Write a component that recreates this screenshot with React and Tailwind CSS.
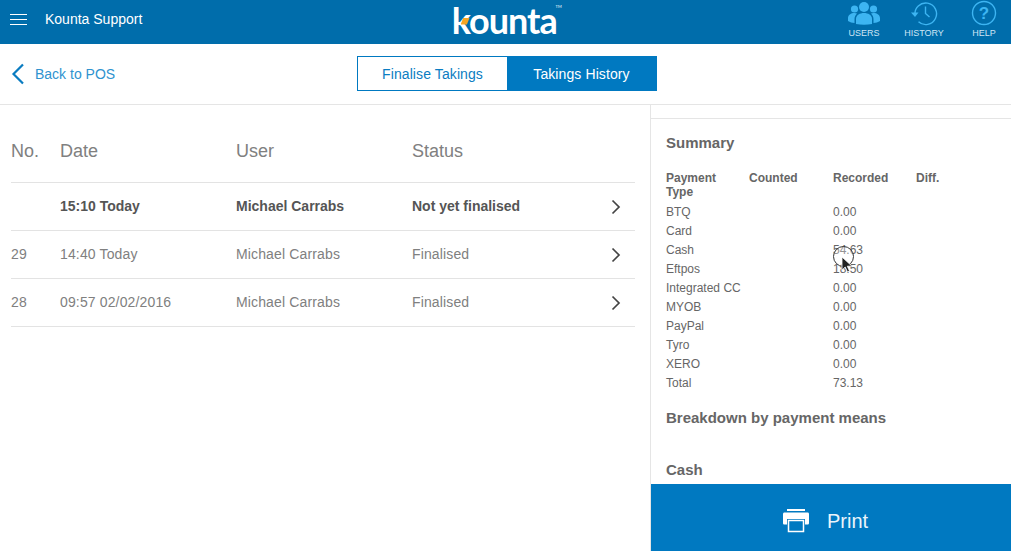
import React from "react";

const rows = [
  { no: "", date: "15:10 Today", user: "Michael Carrabs", status: "Not yet finalised", bold: true },
  { no: "29", date: "14:40 Today", user: "Michael Carrabs", status: "Finalised" },
  { no: "28", date: "09:57 02/02/2016", user: "Michael Carrabs", status: "Finalised" },
];
const pay = [
  ["BTQ", "0.00"], ["Card", "0.00"], ["Cash", "54.63"], ["Eftpos", "18.50"], ["Integrated CC", "0.00"],
  ["MYOB", "0.00"], ["PayPal", "0.00"], ["Tyro", "0.00"], ["XERO", "0.00"], ["Total", "73.13"],
];

function Users() {
  return (
    <svg width="32" height="24" viewBox="0 0 32 24" fill="#3db5f2">
      <circle cx="16" cy="6" r="5" />
      <path d="M8 23v-5c0-4 4-6 8-6s8 2 8 6v5c-5 1-11 1-16 0z" />
      <circle cx="6.500" cy="8" r="3.600" />
      <path d="M0 20v-3c0-3 3-5 6.500-5 1 0 2 .2 2.500.5C7.500 14 6.500 16 6.500 18v4C4 22 2 21 0 20z" />
      <circle cx="25.500" cy="8" r="3.600" />
      <path d="M32 20v-3c0-3-3-5-6.500-5-1 0-2 .2-2.500.5 1.500 1.500 2.500 3.500 2.500 5.500v4c2.500 0 4.500-1 6.500-2z" />
    </svg>
  );
}
function History() {
  return (
    <svg width="28" height="26" viewBox="0 0 28 26" fill="none" stroke="#3db5f2" strokeWidth="1.400">
      <path d="M5 15a10.800 10.800 0 1 1 3.500 6.800" />
      <path d="M1 12.500h7.500L5 17z" fill="#3db5f2" stroke="none" />
      <path d="M15.500 6.500v7l4 3.500" />
    </svg>
  );
}
function Help() {
  return (
    <svg width="26" height="26" viewBox="0 0 26 26" fill="none">
      <circle cx="13" cy="13" r="11.500" stroke="#3db5f2" strokeWidth="1.400" />
      <text x="13" y="19" textAnchor="middle" fontSize="17" fontWeight="700" fontFamily="Liberation Sans" fill="#3db5f2">?</text>
    </svg>
  );
}
function NavItem({ icon, label }) {
  return (
    <div className="flex flex-col items-center w-[60px]">
      <div className="h-[26px] flex items-center justify-center">{icon}</div>
      <div className="text-[9px] leading-[10px] mt-[2px] text-[#cfe6f5]">{label}</div>
    </div>
  );
}
function Chevron() {
  return (
    <svg width="10" height="16" viewBox="0 0 10 16" fill="none" stroke="#444" strokeWidth="1.700">
      <path d="M1.500 1.500 8 8l-6.500 6.500" />
    </svg>
  );
}

export default function App() {
  return (
    <div className="w-[1011px] h-[551px] overflow-hidden bg-white flex flex-col relative" style={{ fontFamily: '"Liberation Sans", Arial, sans-serif' }}>
      <header className="h-[44px] bg-[#006dab] flex items-center text-white shrink-0 relative">
        <div className="w-[45px] pl-[10px] flex flex-col gap-[4px] mb-[6px]">
          <div className="w-[17px] h-px bg-white" />
          <div className="w-[17px] h-px bg-white" />
          <div className="w-[17px] h-px bg-white" />
        </div>
        <div className="text-[14px] mb-[6px]">Kounta Support</div>
        <div className="flex-1 flex justify-center">
          <div className="relative ml-[32px] mt-[-5px] text-[36px] leading-[36px] font-bold tracking-[-1px] h-[36px]" style={{ fontFamily: "Lato, sans-serif" }}>
            kounta
            <span className="absolute left-[9px] top-[16px] w-[9px] h-[7px] bg-[#f5a623] [clip-path:polygon(30%_0,100%_0,70%_100%,0_100%)]" />
            <span className="absolute right-[-5px] top-[3px] text-[4px] leading-[4px] font-normal tracking-normal">TM</span>
          </div>
        </div>
        <div className="flex items-start mr-[-3px] mb-[7px]">
          <NavItem icon={<Users />} label="USERS" />
          <NavItem icon={<History />} label="HISTORY" />
          <NavItem icon={<Help />} label="HELP" />
        </div>
      </header>

      <div className="h-[61px] shrink-0 border-b border-[#e5e5e5] flex items-center relative">
        <div className="flex items-center pl-[11px] w-[357px] text-[14px] text-[#2f93cf]">
          <svg width="14" height="22" viewBox="0 0 14 22" fill="none" stroke="#0a7cc1" strokeWidth="2.200" className="mr-[10px]">
            <path d="M12 1.500 2.500 11l9.500 9.500" />
          </svg>
          Back to POS
        </div>
        <div className="flex h-[35px] mb-[2px] text-[14px] tracking-[0.1px] border border-[#0079c1]">
          <div className="w-[149px] pt-[2px] flex items-center justify-center text-[#0b7dc2] bg-white">Finalise Takings</div>
          <div className="w-[149px] pt-[2px] flex items-center justify-center text-white bg-[#0079c1]">Takings History</div>
        </div>
      </div>

      <div className="flex-1 flex min-h-0">
        <main className="w-[650px] shrink-0 pl-[11px] pr-[15px]">
          <div className="h-[78px] flex items-center text-[18px] text-[#808080] border-b border-[#e3e3e3] pt-[16px]">
            <div className="w-[49px]">No.</div>
            <div className="w-[176px]">Date</div>
            <div className="w-[176px]">User</div>
            <div>Status</div>
          </div>
          {rows.map((r, i) => (
            <div key={i} className={`h-[48px] flex items-center text-[14px] border-b border-[#e3e3e3] ${r.bold ? "font-bold text-[#555]" : "text-[#808080] tracking-[0.14px]"}`}>
              <div className="w-[49px]">{r.no}</div>
              <div className="w-[176px]">{r.date}</div>
              <div className="w-[176px]">{r.user}</div>
              <div className="flex-1">{r.status}</div>
              <div className="pr-[14px]"><Chevron /></div>
            </div>
          ))}
        </main>
        <aside className="flex-1 border-l border-[#e5e5e5] flex flex-col min-w-0">
          <div className="flex-1 min-h-0 overflow-hidden text-[12px] text-[#666]">
            <div className="h-[14px] border-b border-[#e5e5e5]" />
            <div className="pl-[15px] pt-[15px] text-[15px] leading-[17px] font-bold text-[#666]">Summary</div>
            <div className="pl-[15px] pt-[20px]">
              <div className="grid grid-cols-[83px_84px_83px_83px] font-bold leading-[14px] pb-[3px] text-[#666]">
                <div>Payment<br />Type</div>
                <div>Counted</div>
                <div>Recorded</div>
                <div>Diff.</div>
              </div>
              {pay.map(([a, b]) => (
                <div key={a} className="grid grid-cols-[167px_83px] h-[19px] items-center">
                  <div>{a}</div>
                  <div>{b}</div>
                </div>
              ))}
            </div>
            <div className="pl-[15px] pt-[17px] text-[15px] leading-[17px] font-bold">Breakdown by payment means</div>
            <div className="pl-[15px] pt-[35px] text-[15px] leading-[17px] font-bold">Cash</div>
          </div>
          <div className="h-[67px] shrink-0 bg-[#0079c1] flex items-center justify-center text-[#eaf4fb] text-[20px] pt-[6px] pr-[12px]">
            <svg width="28" height="26" viewBox="0 0 28 26" className="mr-[17px]" fill="white">
              <path d="M5 1h18v2H5z" />
              <path d="M2.500 4.500h23c1 0 1.500.7 1.500 1.500v9c0 1-.6 1.500-1.500 1.500H23V11H5v5.500H2.500C1.500 16.500 1 16 1 15V6c0-.8.6-1.500 1.500-1.500z" />
              <path d="M6.500 12.500h15v11h-15z" fill="none" stroke="white" strokeWidth="1.500" />
            </svg>
            Print
          </div>
        </aside>
      </div>

      <div className="absolute left-[833px] top-[246px] w-[21px] h-[21px] rounded-full border border-[#333] bg-white/30" />
      <svg className="absolute left-[841px] top-[256px]" width="12" height="17" viewBox="0 0 12 17">
        <path d="M1 1v13l3.200-3 2.300 5 2-1-2.200-4.800H11z" fill="#222" stroke="#fff" strokeWidth=".8" />
      </svg>
    </div>
  );
}
